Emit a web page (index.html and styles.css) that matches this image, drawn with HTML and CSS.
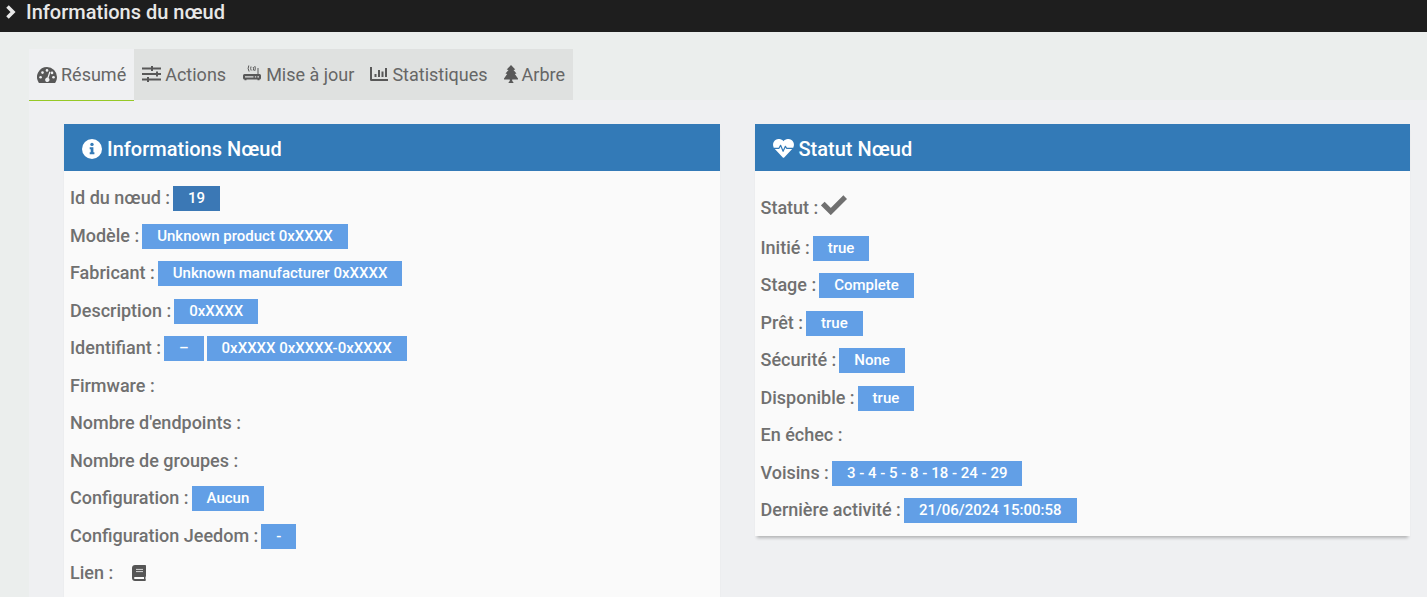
FILE: index.html
```html
<!DOCTYPE html>
<html lang="fr">
<head>
<meta charset="utf-8">
<meta name="viewport" content="width=device-width, initial-scale=1">
<title>Informations du nœud</title>
<link rel="stylesheet" href="styles.css">
</head>
<body>
<header class="titlebar">
  <svg class="chevron" viewBox="0 0 10 14" aria-hidden="true"><path d="M1.500 1.500 7 7l-5.500 5.500" fill="none" stroke="currentColor" stroke-width="3.600"/></svg>
  <h1 class="titlebar-text">Informations du nœud</h1>
</header>
<main class="page">
  <nav class="tabs" role="tablist">
    <button class="tab tab-active" type="button" role="tab" aria-selected="true">
      <svg class="icon-gauge" viewBox="0 0 20 16" aria-hidden="true"><path fill="currentColor" fill-rule="evenodd" d="M10 0a10 10 0 0 1 10 10c0 2-.6 3.900-1.600 5.400-.2.400-.5.600-.9.600H2.500c-.4 0-.7-.2-.9-.6A10 10 0 0 1 10 0z"/><g fill="#eff0f2"><circle cx="3.600" cy="10.300" r="1.300"/><circle cx="5.500" cy="5.600" r="1.300"/><circle cx="10" cy="3.400" r="1.300"/><circle cx="15" cy="5.900" r="1.300"/><circle cx="16.500" cy="10.300" r="1.300"/><path d="m12.300 4.600 1.200.4-1.900 6a2.200 2.200 0 1 1-1.200-.4z"/></g></svg>
      <span>Résumé</span>
    </button>
    <button class="tab" type="button" role="tab" aria-selected="false">
      <svg class="icon-sliders" viewBox="0 0 19 16" aria-hidden="true"><path fill="currentColor" d="M0 1.500h19v2H0zM0 7h19v2H0zM0 12.500h19v2H0zM9 0h2v5H9zM14 5.500h2v5h-2zM5 11h2v5H5z"/></svg>
      <span>Actions</span>
    </button>
    <button class="tab tab-router" type="button" role="tab" aria-selected="false">
      <svg class="icon-router" viewBox="0 0 18 16" aria-hidden="true"><path fill="currentColor" fill-rule="evenodd" d="M1.500 9h13V3h1v6h1Q18 9 18 10.500v2.500q0 1.500-1.500 1.500v.7h-2v-.7h-11v.7h-2v-.7Q0 14.500 0 13v-2.500Q0 9 1.500 9zM2 11.200v1.200h8.500v-1.200zm9.800 0v1.200h1.400v-1.200zm2.600 0v1.200H16v-1.200z"/><g fill="none" stroke="currentColor" stroke-width="1"><path d="M5.800.500q-1.500 3 .3 6M8 1.500q-.8 2 .2 4M10.200 2q.9 1.800 0 3.500M11.800 1q1.200 2.500-.1 5"/></g></svg>
      <span>Mise à jour</span>
    </button>
    <button class="tab" type="button" role="tab" aria-selected="false">
      <svg class="icon-chart" viewBox="0 0 18 14" aria-hidden="true"><path fill="currentColor" d="M0 0h2v12h16v2H1.200Q0 14 0 12.800zM4.500 7h2v3h-2zM8 3h2v7H8zM11.500 4.500h2V10h-2zM15 1h2v9h-2z"/></svg>
      <span>Statistiques</span>
    </button>
    <button class="tab" type="button" role="tab" aria-selected="false">
      <svg class="icon-tree" viewBox="0 0 14 18" aria-hidden="true"><path fill="currentColor" d="m7 0 4.300 4.500-1.800.5 3 3.500-1.700.5L14 13.500c.3.500-.1 1-.7 1H8.200V16l1.200 1.200V18H4.600v-.8L5.800 16v-1.500H.7c-.6 0-1-.5-.7-1L3.200 9l-1.700-.5 3-3.500-1.800-.5z"/></svg>
      <span>Arbre</span>
    </button>
  </nav>
  <div class="content" role="tabpanel">
    <section class="panel">
      <h2 class="panel-title">
        <svg class="icon-info" viewBox="0 0 20 20" aria-hidden="true"><circle cx="10" cy="10" r="10" fill="currentColor"/><g fill="#337ab7"><circle cx="10" cy="5.400" r="1.700"/><path d="M7.700 8.300h3.700v5h1v1.900H7.700v-1.900h1v-3.100h-1z"/></g></svg>
        <span>Informations Nœud</span>
      </h2>
      <dl class="rows">
        <div class="row"><dt>Id du nœud :</dt><dd class="badge badge-dark">19</dd></div>
        <div class="row"><dt>Modèle :</dt><dd class="badge">Unknown product 0xXXXX</dd></div>
        <div class="row"><dt>Fabricant :</dt><dd class="badge">Unknown manufacturer 0xXXXX</dd></div>
        <div class="row"><dt>Description :</dt><dd class="badge">0xXXXX</dd></div>
        <div class="row"><dt>Identifiant :</dt><dd class="badge">–</dd><dd class="badge">0xXXXX 0xXXXX-0xXXXX</dd></div>
        <div class="row"><dt>Firmware :</dt><dd></dd></div>
        <div class="row"><dt>Nombre d'endpoints :</dt><dd></dd></div>
        <div class="row"><dt>Nombre de groupes :</dt><dd></dd></div>
        <div class="row"><dt>Configuration :</dt><dd class="badge">Aucun</dd></div>
        <div class="row"><dt>Configuration Jeedom :</dt><dd class="badge">-</dd></div>
        <div class="row"><dt>Lien :</dt><dd><a class="doc-link" href="#documentation" aria-label="Documentation"><svg class="icon-book" viewBox="0 0 14 16" aria-hidden="true"><path fill="currentColor" fill-rule="evenodd" d="M3 0h10c.6 0 1 .4 1 1v10c0 .5-.2.700-.5.900v2.300c.3.200.5.500.5.900s-.4.900-1 .9H3c-1.700 0-3-1.300-3-3V3c0-1.700 1.300-3 3-3zM3 12c-1.300 0-1.300 2 0 2h9v-2z"/><path stroke="#fafafa" stroke-width=".8" d="M4 4.400h7M4 6.600h7"/></svg></a></dd></div>
      </dl>
    </section>
    <section class="panel">
      <h2 class="panel-title">
        <svg class="icon-heart" viewBox="0 0 21 19" aria-hidden="true"><path fill="currentColor" d="M10.500 2.200C12.500-.5 17-.8 19.200 1.600c2.300 2.300 2.300 5.600.2 8.200l-8.200 8.700q-.7.700-1.400 0L1.600 9.800C-.5 7.200-.5 3.900 1.800 1.600 4-.8 8.500-.5 10.500 2.200z"/><path fill="none" stroke="#337ab7" stroke-width="1.200" stroke-linejoin="round" d="M1 9.300h5l1.600-3 2.500 6 2.300-5 1.200 2H20"/></svg>
        <span>Statut Nœud</span>
      </h2>
      <dl class="rows rows-status">
        <div class="row row-state"><dt>Statut :</dt><dd><svg class="icon-check" viewBox="0 0 26 20" role="img" aria-label="OK"><path fill="none" stroke="currentColor" stroke-width="5.200" d="m1.800 8.500 8 8L24.200 2.200"/></svg></dd></div>
        <div class="row"><dt>Initié :</dt><dd class="badge">true</dd></div>
        <div class="row"><dt>Stage :</dt><dd class="badge">Complete</dd></div>
        <div class="row"><dt>Prêt :</dt><dd class="badge">true</dd></div>
        <div class="row"><dt>Sécurité :</dt><dd class="badge">None</dd></div>
        <div class="row"><dt>Disponible :</dt><dd class="badge">true</dd></div>
        <div class="row"><dt>En échec :</dt><dd></dd></div>
        <div class="row"><dt>Voisins :</dt><dd class="badge">3 - 4 - 5 - 8 - 18 - 24 - 29</dd></div>
        <div class="row"><dt>Dernière activité :</dt><dd class="badge">21/06/2024 15:00:58</dd></div>
      </dl>
    </section>
  </div>
</main>
</body>
</html>
```
FILE: styles.css
```css
* { box-sizing: border-box; }
html, body { height: 100%; }
body {
  margin: 0;
  overflow: hidden;
  background: #ebeeed;
  color: #666;
  font-family: Roboto, "Open Sans", sans-serif;
}
h1, h2, dl, dt, dd { margin: 0; }
svg { display: block; flex: none; }

.titlebar {
  display: flex;
  align-items: center;
  gap: 10px;
  height: 32px;
  padding: 0 6px 8px;
  background: #1e1e1e;
  color: #e8e8e8;
}
.chevron { width: 10px; height: 14px; }
.titlebar-text { font-size: 20px; line-height: 24px; font-weight: 500; }

.page { padding: 17px 0 0 29px; }
.tabs { display: flex; }
.tab {
  display: flex;
  align-items: center;
  gap: 4px;
  height: 51px;
  padding: 0 8px;
  border: 0;
  background: #dfe1e0;
  color: #666;
  font: 400 18px/24px Roboto, sans-serif;
  cursor: pointer;
}
.tab svg { color: #585858; }
.tab-active {
  height: 52px;
  margin-bottom: -1px;
  border-bottom: 1px solid #96c927;
  background: #eff0f2;
}
.tab-router { gap: 5px; padding-left: 9px; }
.icon-gauge { width: 20px; height: 16px; }
.icon-sliders { width: 19px; height: 16px; margin-bottom: 2px; }
.icon-router { width: 18px; height: 16px; margin-bottom: 4px; }
.icon-chart { width: 18px; height: 14px; margin-bottom: 2px; }
.icon-tree { width: 14px; height: 18px; margin-bottom: 2px; }

.content {
  display: grid;
  grid-template-columns: 1fr 1fr;
  align-items: start;
  gap: 35px;
  padding: 24px 17px 24px 35px;
  background: #eff0f2;
}
.panel { background: #fafafa; box-shadow: 0 4px 3px -2px rgba(0, 0, 0, 0.25); }
.panel-title {
  display: flex;
  align-items: center;
  gap: 5px;
  height: 47px;
  padding: 2px 18px 0;
  background: #337ab7;
  color: #fff;
  font-size: 20px;
  line-height: 24px;
  font-weight: 500;
}
.icon-info { width: 20px; height: 20px; }
.icon-heart { width: 21px; height: 19px; }

.rows { padding: 8px 6px; }
.rows-status { padding: 16px 6px 7px; }
.row {
  display: flex;
  align-items: center;
  gap: 3px;
  height: 37px;
  color: #707070;
  font-size: 18px;
  line-height: 24px;
  font-weight: 500;
}
.row:nth-child(odd) { height: 38px; }
.row.row-state { height: 42px; }
.row .badge {
  margin-top: 1px;
  padding: 0 15px;
  background: #629fe6;
  color: #fff;
  font-size: 15px;
  line-height: 25px;
}
.row .badge-dark { background: #3b78b5; }
.icon-check { width: 26px; height: 20px; margin-bottom: 6px; }
.doc-link { display: block; margin-left: 16px; color: #555; }
.icon-book { width: 14px; height: 16px; }
```
